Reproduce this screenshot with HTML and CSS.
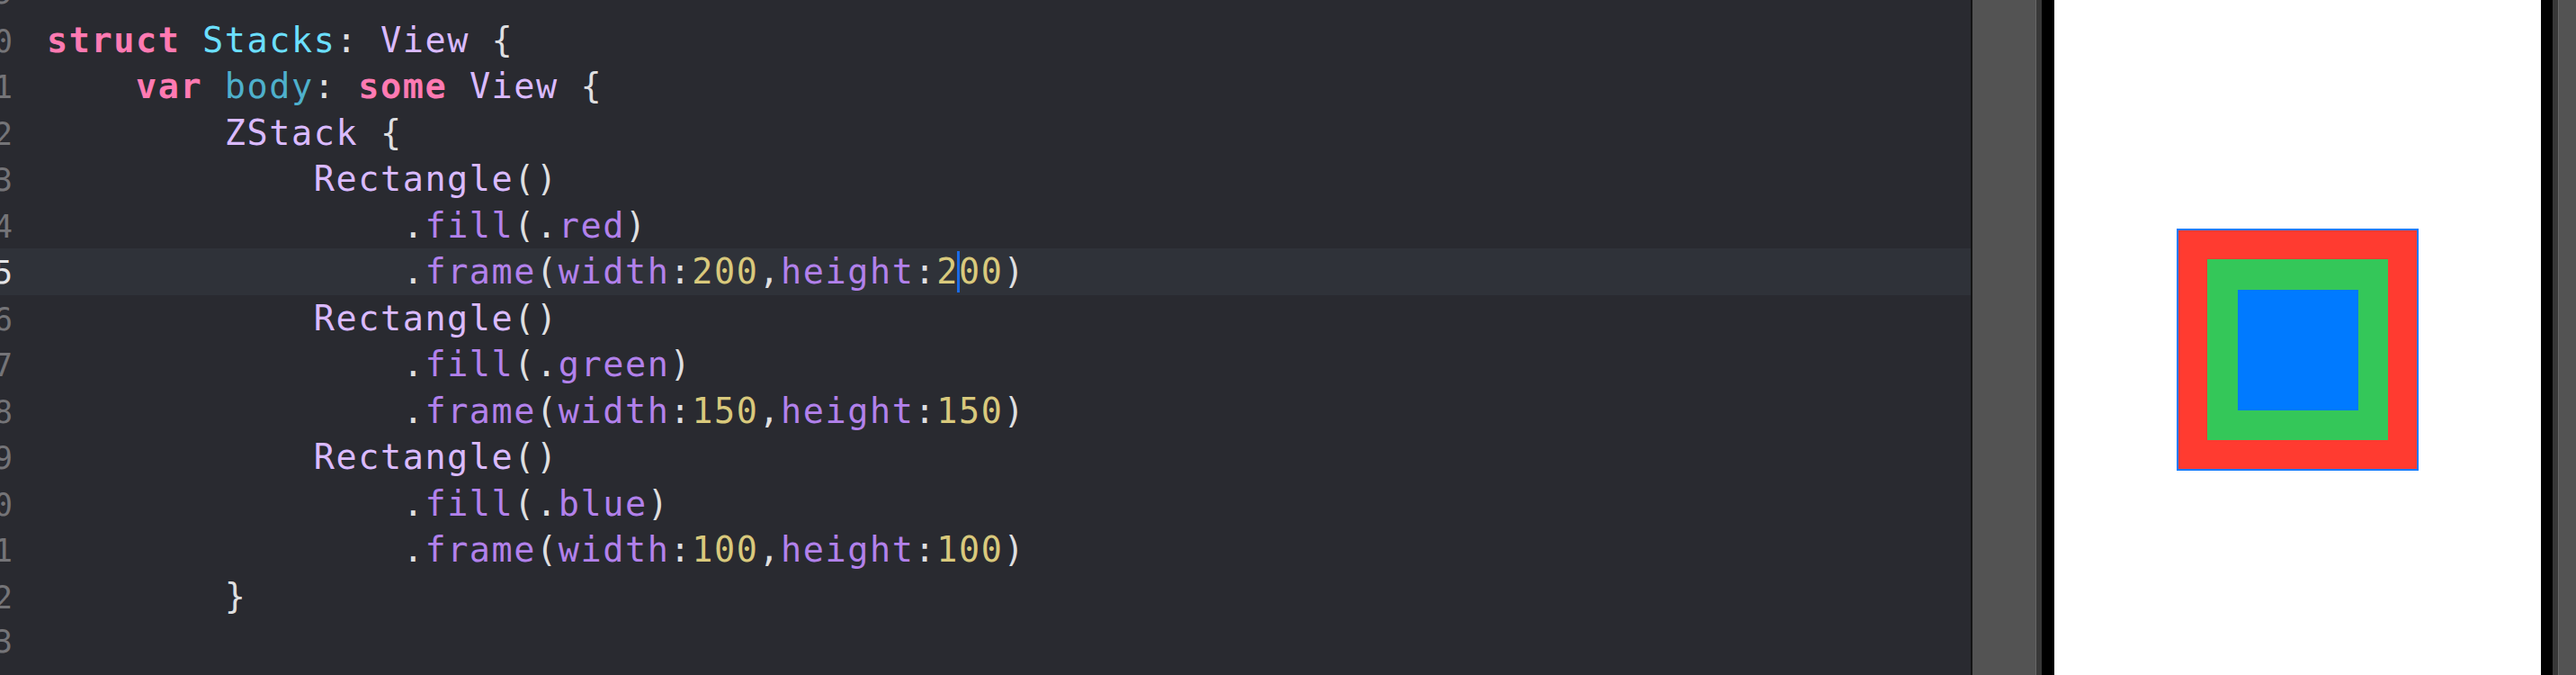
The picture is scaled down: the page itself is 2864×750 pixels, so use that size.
FILE: index.html
```html
<!DOCTYPE html>
<html lang="en">
<head>
<meta charset="utf-8">
<title>Stacks</title>
<link rel="stylesheet" href="styles.css">
</head>
<body>
<div class="editor">
  <div class="lines">
    <div class="row"><span class="ln">9</span><span class="src"></span></div>
    <div class="row"><span class="ln">10</span><span class="src"><span class="kw">struct</span> <span class="decl">Stacks</span>: <span class="type">View</span> {</span></div>
    <div class="row"><span class="ln">11</span><span class="src">    <span class="kw">var</span> <span class="odecl">body</span>: <span class="kw">some</span> <span class="type">View</span> {</span></div>
    <div class="row"><span class="ln">12</span><span class="src">        <span class="type">ZStack</span> {</span></div>
    <div class="row"><span class="ln">13</span><span class="src">            <span class="type">Rectangle</span>()</span></div>
    <div class="row"><span class="ln">14</span><span class="src">                .<span class="fn">fill</span>(.<span class="fn">red</span>)</span></div>
    <div class="row current"><span class="ln">15</span><span class="src">                .<span class="fn">frame</span>(<span class="fn">width</span>:<span class="num">200</span>,<span class="fn">height</span>:<span class="num">2</span><span class="caret"></span><span class="num">00</span>)</span></div>
    <div class="row"><span class="ln">16</span><span class="src">            <span class="type">Rectangle</span>()</span></div>
    <div class="row"><span class="ln">17</span><span class="src">                .<span class="fn">fill</span>(.<span class="fn">green</span>)</span></div>
    <div class="row"><span class="ln">18</span><span class="src">                .<span class="fn">frame</span>(<span class="fn">width</span>:<span class="num">150</span>,<span class="fn">height</span>:<span class="num">150</span>)</span></div>
    <div class="row"><span class="ln">19</span><span class="src">            <span class="type">Rectangle</span>()</span></div>
    <div class="row"><span class="ln">20</span><span class="src">                .<span class="fn">fill</span>(.<span class="fn">blue</span>)</span></div>
    <div class="row"><span class="ln">21</span><span class="src">                .<span class="fn">frame</span>(<span class="fn">width</span>:<span class="num">100</span>,<span class="fn">height</span>:<span class="num">100</span>)</span></div>
    <div class="row"><span class="ln">22</span><span class="src">        }</span></div>
    <div class="row"><span class="ln">23</span><span class="src"></span></div>
  </div>
</div>
<div class="divider"></div>
<div class="canvas-pad left"></div>
<div class="edge"></div>
<div class="shade"></div>
<div class="bezel left"></div>
<div class="screen">
  <div class="sq red">
    <div class="sq green">
      <div class="sq blue"></div>
    </div>
  </div>
</div>
<div class="bezel right"></div>
<div class="shade right"></div>
<div class="edge"></div>
<div class="canvas-pad right"></div>
</body>
</html>
```
FILE: styles.css
```css
html, body {
  margin: 0;
  padding: 0;
}
body {
  width: 2864px;
  height: 750px;
  overflow: hidden;
  display: flex;
  background: #535353;
}
.editor {
  flex: none;
  width: 2191px;
  height: 750px;
  overflow: hidden;
  background: #292a30;
  font-family: "DejaVu Sans Mono", monospace;
}
.lines {
  margin-top: -33px;
}
.row {
  display: flex;
  align-items: baseline;
  height: 51.5px;
}
.row.current {
  background: #2f3239;
}
.ln {
  flex: none;
  width: 80px;
  margin-left: -66px;
  text-align: right;
  font-size: 35px;
  line-height: 51.5px;
  color: #747478;
}
.row.current .ln {
  color: #e4e4e6;
}
.src {
  padding-left: 38px;
  font-size: 38.5px;
  letter-spacing: 1.55px;
  line-height: 51.5px;
  white-space: pre;
  color: #dfdfe0;
}
.kw {
  color: #ff7ab2;
  font-weight: bold;
}
.decl {
  color: #6bdfff;
}
.odecl {
  color: #4eb0cc;
}
.type {
  color: #dabaff;
}
.fn {
  color: #b281eb;
}
.num {
  color: #d9c97c;
}
.caret {
  display: inline-block;
  width: 3px;
  height: 46px;
  margin: 0 -1.5px;
  vertical-align: -10px;
  background: #1b6ae6;
}
.divider {
  flex: none;
  width: 2px;
  background: #141414;
}
.canvas-pad.left {
  flex: none;
  width: 70px;
  background: #535353;
}
.canvas-pad.right {
  flex: 1;
  background: #535353;
}
.edge {
  flex: none;
  width: 1px;
  background: #666666;
}
.shade {
  flex: none;
  width: 6px;
  background: #383838;
}
.bezel {
  flex: none;
  background: #000;
}
.bezel.left {
  width: 14px;
}
.bezel.right {
  width: 13px;
}
.screen {
  flex: none;
  width: 541px;
  background: #ffffff;
  display: flex;
  flex-direction: column;
  align-items: center;
  padding-top: 254px;
  box-sizing: border-box;
}
.sq {
  display: flex;
  align-items: center;
  justify-content: center;
  box-sizing: border-box;
}
.red {
  width: 269px;
  height: 269px;
  background: #ff3b30;
  border: 2px solid #0a7aff;
}
.green {
  width: 201px;
  height: 201px;
  background: #34c759;
}
.blue {
  width: 134px;
  height: 134px;
  background: #007aff;
}
```
